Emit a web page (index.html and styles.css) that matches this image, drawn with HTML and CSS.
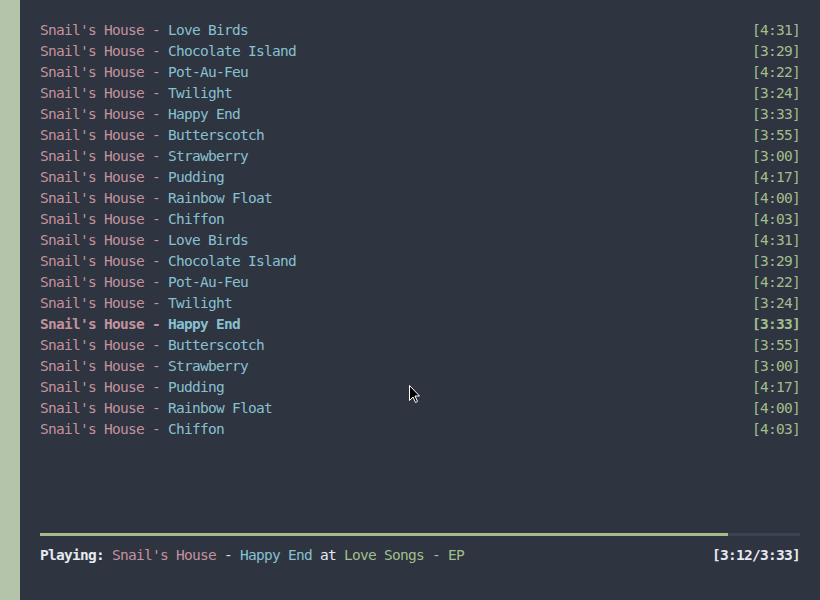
FILE: index.html
```html
<!DOCTYPE html>
<html>
<head>
<meta charset="utf-8">
<link rel="stylesheet" href="styles.css">
</head>
<body>
<div class="app">
  <div class="strip"></div>
  <div class="main">
    <div class="list">
      <div class="row"><span class="t"><span class="ar">Snail's House</span><span class="sep"> - </span><span class="ti">Love Birds</span></span><span class="d">[4:31]</span></div>
      <div class="row"><span class="t"><span class="ar">Snail's House</span><span class="sep"> - </span><span class="ti">Chocolate Island</span></span><span class="d">[3:29]</span></div>
      <div class="row"><span class="t"><span class="ar">Snail's House</span><span class="sep"> - </span><span class="ti">Pot-Au-Feu</span></span><span class="d">[4:22]</span></div>
      <div class="row"><span class="t"><span class="ar">Snail's House</span><span class="sep"> - </span><span class="ti">Twilight</span></span><span class="d">[3:24]</span></div>
      <div class="row"><span class="t"><span class="ar">Snail's House</span><span class="sep"> - </span><span class="ti">Happy End</span></span><span class="d">[3:33]</span></div>
      <div class="row"><span class="t"><span class="ar">Snail's House</span><span class="sep"> - </span><span class="ti">Butterscotch</span></span><span class="d">[3:55]</span></div>
      <div class="row"><span class="t"><span class="ar">Snail's House</span><span class="sep"> - </span><span class="ti">Strawberry</span></span><span class="d">[3:00]</span></div>
      <div class="row"><span class="t"><span class="ar">Snail's House</span><span class="sep"> - </span><span class="ti">Pudding</span></span><span class="d">[4:17]</span></div>
      <div class="row"><span class="t"><span class="ar">Snail's House</span><span class="sep"> - </span><span class="ti">Rainbow Float</span></span><span class="d">[4:00]</span></div>
      <div class="row"><span class="t"><span class="ar">Snail's House</span><span class="sep"> - </span><span class="ti">Chiffon</span></span><span class="d">[4:03]</span></div>
      <div class="row"><span class="t"><span class="ar">Snail's House</span><span class="sep"> - </span><span class="ti">Love Birds</span></span><span class="d">[4:31]</span></div>
      <div class="row"><span class="t"><span class="ar">Snail's House</span><span class="sep"> - </span><span class="ti">Chocolate Island</span></span><span class="d">[3:29]</span></div>
      <div class="row"><span class="t"><span class="ar">Snail's House</span><span class="sep"> - </span><span class="ti">Pot-Au-Feu</span></span><span class="d">[4:22]</span></div>
      <div class="row"><span class="t"><span class="ar">Snail's House</span><span class="sep"> - </span><span class="ti">Twilight</span></span><span class="d">[3:24]</span></div>
      <div class="row current"><span class="t"><span class="ar">Snail's House</span><span class="sep"> - </span><span class="ti">Happy End</span></span><span class="d">[3:33]</span></div>
      <div class="row"><span class="t"><span class="ar">Snail's House</span><span class="sep"> - </span><span class="ti">Butterscotch</span></span><span class="d">[3:55]</span></div>
      <div class="row"><span class="t"><span class="ar">Snail's House</span><span class="sep"> - </span><span class="ti">Strawberry</span></span><span class="d">[3:00]</span></div>
      <div class="row"><span class="t"><span class="ar">Snail's House</span><span class="sep"> - </span><span class="ti">Pudding</span></span><span class="d">[4:17]</span></div>
      <div class="row"><span class="t"><span class="ar">Snail's House</span><span class="sep"> - </span><span class="ti">Rainbow Float</span></span><span class="d">[4:00]</span></div>
      <div class="row"><span class="t"><span class="ar">Snail's House</span><span class="sep"> - </span><span class="ti">Chiffon</span></span><span class="d">[4:03]</span></div>
    </div>
    <div class="progress"><div class="fill" style="width: 90.5%"></div></div>
    <div class="status">
      <span><b class="lbl">Playing:</b> <span class="ar">Snail's House</span><span class="sep"> - </span><span class="ti">Happy End</span> <span class="at">at</span> <span class="al">Love Songs - EP</span></span>
      <b class="pos">[3:12/3:33]</b>
    </div>
  </div>
  <svg class="cursor" width="12" height="19" viewBox="0 0 12 19"><path d="M0.5 0.5 L0.5 15.5 L4 12 L6.5 17.5 L8.5 16.5 L6 11 L10.5 11 Z" fill="#000" stroke="#fff" stroke-width="1"/></svg>
</div>
</body>
</html>
```
FILE: styles.css
```css
html, body {
  margin: 0;
  padding: 0;
  background: #2e3440;
}
.app {
  display: flex;
  width: 820px;
  height: 600px;
  position: relative;
  font-family: "DejaVu Sans Mono", monospace;
  font-size: 14.5px;
  letter-spacing: -0.73px;
}
.strip {
  width: 20px;
  background: #b4c4ab;
  flex: none;
}
.main {
  flex: 1;
  display: flex;
  flex-direction: column;
  padding: 20px 20px 0 20px;
}
.list {
  flex: 1;
}
.row {
  display: flex;
  justify-content: space-between;
  height: 21px;
  line-height: 21px;
  white-space: pre;
}
.ar { color: #c3929f; }
.sep { color: #c3929f; }
.ti { color: #88c0d0; }
.d { color: #a3be8c; }
.current { font-weight: bold; }
.progress {
  height: 3px;
  background: #3b4252;
  margin-bottom: 9px;
}
.fill {
  height: 3px;
  background: #a3be8c;
}
.status {
  display: flex;
  justify-content: space-between;
  height: 21px;
  line-height: 21px;
  white-space: pre;
  margin-bottom: 34px;
  color: #e5e9f0;
}
.status .sep { color: #d8dee9; }
.lbl, .pos { color: #e5e9f0; }
.at { color: #e5e9f0; }
.al { color: #a3be8c; }
.cursor {
  position: absolute;
  left: 409px;
  top: 385px;
}
```
